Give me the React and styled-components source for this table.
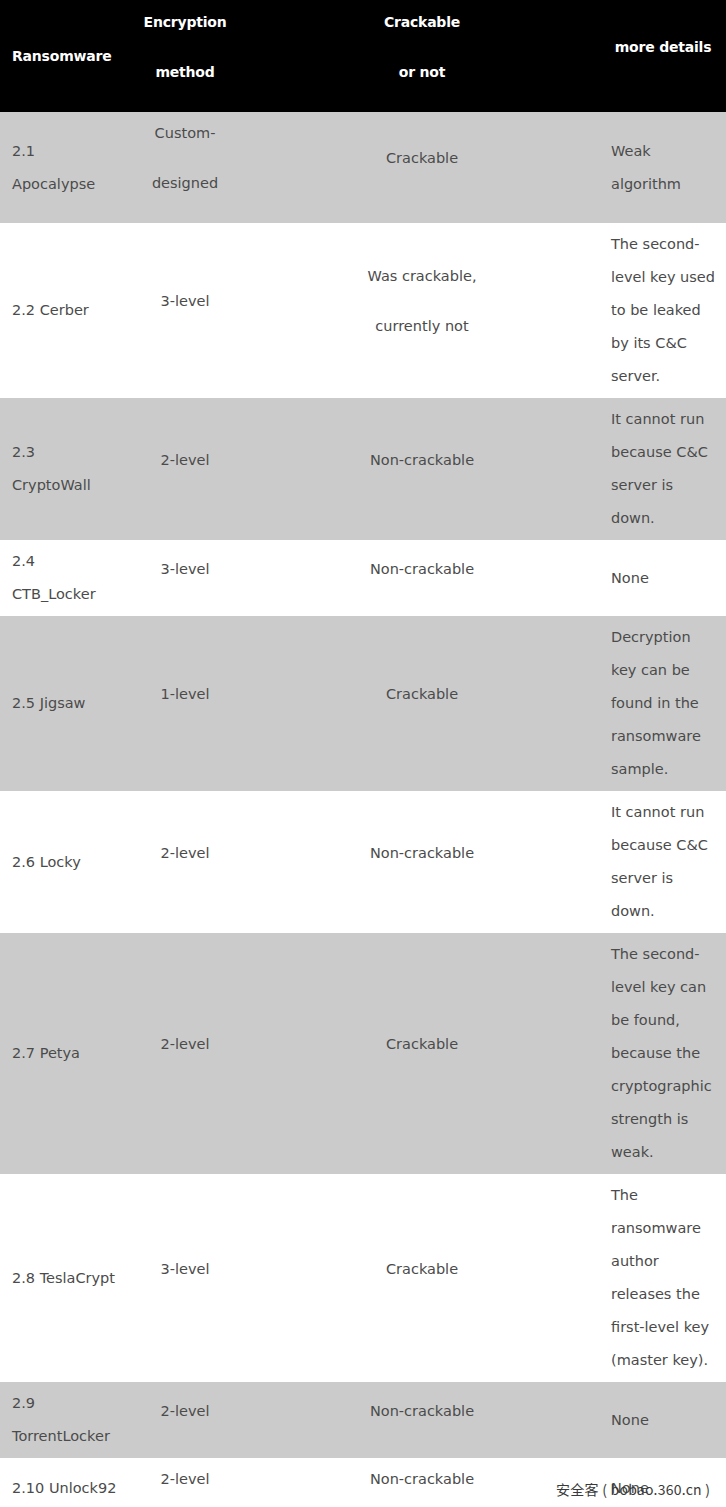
import React from "react";
import styled, { createGlobalStyle } from "styled-components";

const Global = createGlobalStyle`
  html, body { margin: 0; padding: 0; background: #ffffff; }
  body { font-family: "DejaVu Sans", "Noto Sans", sans-serif; }
`;

const Page = styled.div`
  position: relative;
  width: 726px;
  height: 1507px;
  overflow: hidden;
  background: #ffffff;
`;

const Table = styled.table`
  width: 726px;
  border-collapse: collapse;
  border-spacing: 0;
  table-layout: fixed;
`;

const Row = styled.tr`
  background: ${(p) => (p.$head ? "#000000" : p.$shade ? "#cbcbcb" : "#ffffff")};
`;

const HeadCell = styled.th`
  padding: 5.5px 5px 5.5px ${(p) => (p.$align === "left" ? "12px" : "5px")};
  text-align: ${(p) => p.$align};
  vertical-align: middle;
  color: #ffffff;
  font-family: "DejaVu Sans", sans-serif;
  font-weight: 700;
  font-size: 14px;
  letter-spacing: -0.2px;
  white-space: nowrap;
`;

const Cell = styled.td`
  padding: 5px 5px 5px ${(p) => (p.$col === 3 ? "11px" : p.$align === "left" ? "12px" : "5px")};
  text-align: ${(p) => p.$align};
  vertical-align: middle;
  color: #4b4b4b;
  font-family: "DejaVu Sans", sans-serif;
  font-size: 14.5px;
  white-space: nowrap;
`;

const Tight = styled.div`
  line-height: 33px;
`;

const Tall = styled.div`
  line-height: 50px;
  margin-top: -9px;
  margin-bottom: 10px;
`;

const Watermark = styled.div`
  position: absolute;
  left: 556px;
  top: 1478px;
  font-family: "Noto Sans CJK SC", "DejaVu Sans", sans-serif;
  font-size: 14px;
  line-height: 22px;
  color: #3a3a3a;
  letter-spacing: 0.25px;
  white-space: pre;
`;

const rows = [
  { name: ["2.1", "Apocalypse"], method: ["Custom-", "designed"], crack: ["Crackable"], details: ["Weak", "algorithm"] },
  { name: ["2.2 Cerber"], method: ["3-level"], crack: ["Was crackable,", "currently not"], details: ["The second-", "level key used", "to be leaked", "by its C&C", "server."] },
  { name: ["2.3", "CryptoWall"], method: ["2-level"], crack: ["Non-crackable"], details: ["It cannot run", "because C&C", "server is", "down."] },
  { name: ["2.4", "CTB_Locker"], method: ["3-level"], crack: ["Non-crackable"], details: ["None"] },
  { name: ["2.5 Jigsaw"], method: ["1-level"], crack: ["Crackable"], details: ["Decryption", "key can be", "found in the", "ransomware", "sample."] },
  { name: ["2.6 Locky"], method: ["2-level"], crack: ["Non-crackable"], details: ["It cannot run", "because C&C", "server is", "down."] },
  { name: ["2.7 Petya"], method: ["2-level"], crack: ["Crackable"], details: ["The second-", "level key can", "be found,", "because the", "cryptographic", "strength is", "weak."] },
  { name: ["2.8 TeslaCrypt"], method: ["3-level"], crack: ["Crackable"], details: ["The", "ransomware", "author", "releases the", "first-level key", "(master key)."] },
  { name: ["2.9", "TorrentLocker"], method: ["2-level"], crack: ["Non-crackable"], details: ["None"] },
  { name: ["2.10 Unlock92"], method: ["2-level"], crack: ["Non-crackable"], details: ["None"] },
];

const Lines = ({ lines }) =>
  lines.map((l, i) => (
    <React.Fragment key={i}>
      {i > 0 && <br />}
      {l}
    </React.Fragment>
  ));

export default function App() {
  return (
    <Page>
      <Global />
      <Table>
        <colgroup>
          <col style={{ width: 126 }} />
          <col style={{ width: 118 }} />
          <col style={{ width: 356 }} />
          <col style={{ width: 126 }} />
        </colgroup>
        <thead>
          <Row $head>
            <HeadCell $align="left">
              <Tight>Ransomware</Tight>
            </HeadCell>
            <HeadCell $align="center">
              <Tall>
                <Lines lines={["Encryption", "method"]} />
              </Tall>
            </HeadCell>
            <HeadCell $align="center">
              <Tall>
                <Lines lines={["Crackable", "or not"]} />
              </Tall>
            </HeadCell>
            <HeadCell $align="center">
              <Tall>more details</Tall>
            </HeadCell>
          </Row>
        </thead>
        <tbody>
          {rows.map((r, i) => (
            <Row key={i} $shade={i % 2 === 0}>
              <Cell $align="left" $col={0}>
                <Tight>
                  <Lines lines={r.name} />
                </Tight>
              </Cell>
              <Cell $align="center" $col={1}>
                <Tall>
                  <Lines lines={r.method} />
                </Tall>
              </Cell>
              <Cell $align="center" $col={2}>
                <Tall>
                  <Lines lines={r.crack} />
                </Tall>
              </Cell>
              <Cell $align="left" $col={3}>
                <Tight>
                  <Lines lines={r.details} />
                </Tight>
              </Cell>
            </Row>
          ))}
        </tbody>
      </Table>
      <Watermark>{"安全客 ( bobao.360.cn )"}</Watermark>
    </Page>
  );
}
